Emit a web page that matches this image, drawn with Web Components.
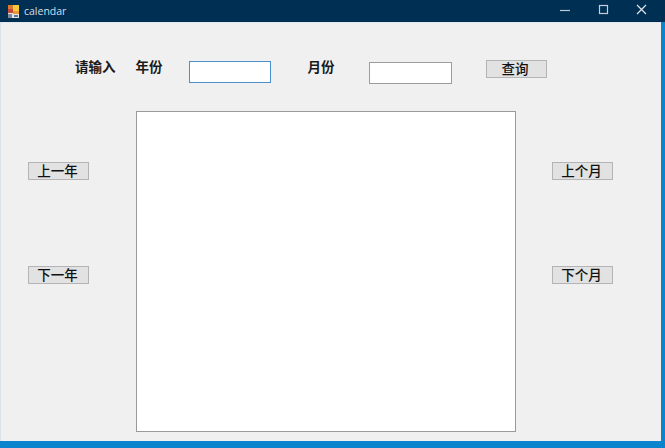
<!DOCTYPE html>
<html lang="zh">
<head>
<meta charset="utf-8">
<title>calendar</title>
<style>
  html, body { margin: 0; height: 100%; background: #0a84cc; overflow: hidden; }
  body { font-family: "Noto Sans CJK SC", "Liberation Sans", sans-serif; }
</style>
</head>
<body>
<win-form caption="calendar">
  <div slot="top" style="display:contents">
    <win-label style="margin:37px 0 0 74px">请输入</win-label>
    <win-label style="margin:37px 0 0 20px">年份</win-label>
    <win-input focused style="margin:38px 0 0 26px;width:82px"></win-input>
    <win-label style="margin:37px 0 0 37px">月份</win-label>
    <win-input style="margin:39px 0 0 34px;width:83px"></win-input>
    <win-button style="margin:37px 0 0 34px">查询</win-button>
  </div>
  <win-button slot="left">上一年</win-button>
  <win-button slot="left">下一年</win-button>
  <win-button slot="right">上个月</win-button>
  <win-button slot="right">下个月</win-button>
</win-form>

<script>
const formTemplate = document.createElement('template');
formTemplate.innerHTML = `
  <style>
    :host {
      display: flex;
      flex-direction: column;
      width: 665px;
      height: 448px;
      box-sizing: border-box;
      padding-bottom: 7px;
    }
    .titlebar {
      height: 22px;
      flex: none;
      display: flex;
      align-items: center;
      background: #002f54;
      color: #d5dfe8;
      font: 10.5px "Open Sans", "Liberation Sans", sans-serif;
    }
    .titlebar svg { display: block; }
    .logo { margin: 0 5px 0 8px; }
    .caption { flex: 1; }
    .controls { display: flex; margin-right: 5px; }
    .controls svg { width: 38px; height: 22px; }
    .client {
      flex: 1;
      margin-right: 4px;
      background: #f0f0f0;
      border-top: 1px solid #dfe8f0;
      border-left: 1px solid #d8e4ec;
      display: flex;
      flex-direction: column;
    }
    .top { display: flex; height: 88px; align-items: flex-start; }
    .main { display: flex; }
    .side {
      display: flex;
      flex-direction: column;
      gap: 86px;
      padding-top: 51px;
    }
    .side.left { padding-left: 27px; width: 135px; box-sizing: border-box; }
    .side.right { padding-left: 36px; }
    .panel {
      width: 378px;
      height: 319px;
      background: #fff;
      border: 1px solid #9a9a9a;
    }
  </style>
  <div class="titlebar">
    <svg class="logo" width="11" height="13" viewBox="0 0 11 13">
      <rect width="11" height="13" fill="#e8e4dc"/>
      <rect x="0" y="0" width="5" height="4" fill="#d9772c"/>
      <rect x="5" y="0" width="6" height="6" fill="#f5c93a"/>
      <rect x="0" y="4" width="5" height="4" fill="#c9473a"/>
      <rect x="5" y="6" width="6" height="3" fill="#e99a35"/>
      <rect x="0" y="9" width="4" height="4" fill="#7c8aa0"/>
      <rect x="6" y="10" width="4" height="2" fill="#5574a8"/>
    </svg>
    <span class="caption"></span>
    <div class="controls">
      <svg viewBox="0 0 38 22"><path d="M14 10.5h10" stroke="#b9c9d6" stroke-width="1.2"/></svg>
      <svg viewBox="0 0 38 22"><rect x="15.5" y="5.5" width="8" height="8" fill="none" stroke="#c3d0db" stroke-width="1.2"/></svg>
      <svg viewBox="0 0 38 22"><path d="M15 5l9 9M24 5l-9 9" stroke="#dde5ec" stroke-width="1.2"/></svg>
    </div>
  </div>
  <div class="client">
    <div class="top"><slot name="top"></slot></div>
    <div class="main">
      <div class="side left"><slot name="left"></slot></div>
      <div class="panel"></div>
      <div class="side right"><slot name="right"></slot></div>
    </div>
  </div>
`;

class WinForm extends HTMLElement {
  constructor() {
    super();
    this.attachShadow({ mode: 'open' });
    this.shadowRoot.appendChild(formTemplate.content.cloneNode(true));
    this.shadowRoot.querySelector('.caption').textContent = this.getAttribute('caption');
  }
}

class WinLabel extends HTMLElement {
  constructor() {
    super();
    this.attachShadow({ mode: 'open' }).innerHTML = `
      <style>
        :host {
          display: block;
          flex: none;
          font: 700 13.5px/1 "Noto Sans CJK SC", sans-serif;
          color: #1a1a1a;
        }
      </style>
      <slot></slot>`;
  }
}

class WinInput extends HTMLElement {
  constructor() {
    super();
    this.attachShadow({ mode: 'open' }).innerHTML = `
      <style>
        :host {
          display: block;
          flex: none;
          box-sizing: border-box;
          height: 22px;
          background: #fff;
          border: 1px solid #9c9c9c;
        }
        :host([focused]) { border-color: #4a90cf; }
      </style>`;
  }
}

class WinButton extends HTMLElement {
  constructor() {
    super();
    this.attachShadow({ mode: 'open' }).innerHTML = `
      <style>
        :host {
          display: flex;
          flex: none;
          align-items: center;
          justify-content: center;
          box-sizing: border-box;
          width: 61px;
          height: 18px;
          padding-right: 2px;
          background: #e2e2e2;
          border: 1px solid #b4b4b4;
          font: 500 13.5px/1 "Noto Sans CJK SC", sans-serif;
          color: #111;
        }
      </style>
      <slot></slot>`;
  }
}

customElements.define('win-form', WinForm);
customElements.define('win-label', WinLabel);
customElements.define('win-input', WinInput);
customElements.define('win-button', WinButton);
</script>
</body>
</html>
